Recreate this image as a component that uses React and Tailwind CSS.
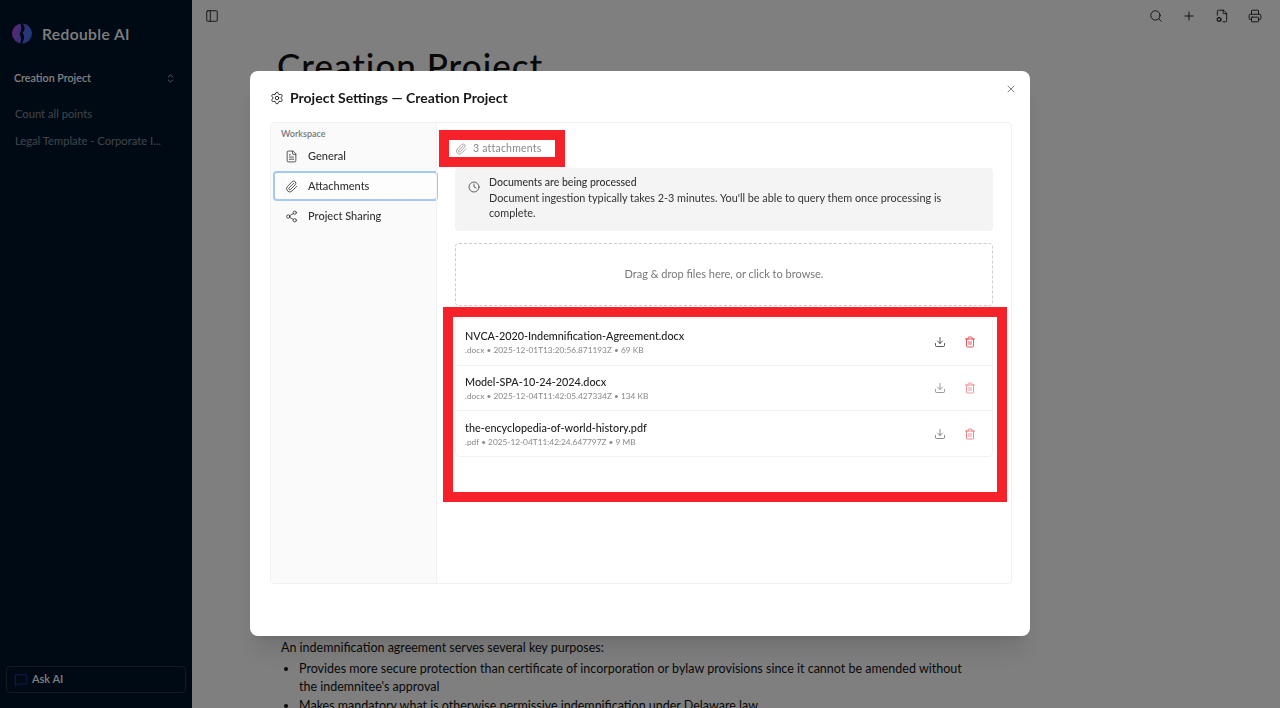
import { Settings, FileText, Paperclip, Share2, Clock, Download, Trash2, X, Search, Plus, FileCog, Printer, PanelLeft, ChevronsUpDown, MessageSquare } from 'lucide-react'

const NAV = [
  { label: 'General', Icon: FileText },
  { label: 'Attachments', Icon: Paperclip, active: true },
  { label: 'Project Sharing', Icon: Share2 },
]

const FILES = [
  { name: 'NVCA-2020-Indemnification-Agreement.docx', meta: '.docx • 2025-12-01T13:20:56.871193Z • 69 KB', dim: '' },
  { name: 'Model-SPA-10-24-2024.docx', meta: '.docx • 2025-12-04T11:42:05.427334Z • 134 KB', dim: 'opacity-60' },
  { name: 'the-encyclopedia-of-world-history.pdf', meta: '.pdf • 2025-12-04T11:42:24.647797Z • 9 MB', dim: 'opacity-70' },
]

function Sidebar() {
  return (
    <aside className="w-[192px] shrink-0 h-full bg-[#001429] flex flex-col text-white">
      <div className="flex items-center gap-[10px] pl-[12px] h-[66px]">
        <svg width="20" height="21" viewBox="0 0 20 21" className="shrink-0">
          <defs>
            <linearGradient id="logo" x1="0" y1="0" x2="1" y2="0.3">
              <stop offset="0" stopColor="#c04be8" />
              <stop offset="1" stopColor="#3f6ff0" />
            </linearGradient>
          </defs>
          <circle cx="10" cy="10.5" r="10" fill="url(#logo)" />
          <path d="M10 0 C13.5 3 13.5 7 10.5 10 C13 12.5 12.5 17 9.5 21 L8 21 C9.5 17 9.5 14 7.5 11 C10 8 9.5 3 8 0 Z" fill="#001429" />
        </svg>
        <span className="text-[15.6px] font-semibold tracking-[0.4px] pt-[3px]">Redouble AI</span>
      </div>
      <div className="flex items-center justify-between pl-[14px] pr-[16px] mt-[3px] h-[18px]">
        <span className="text-[10.7px] font-semibold">Creation Project</span>
        <ChevronsUpDown size={11} strokeWidth={1.5} />
      </div>
      <div className="flex flex-col pl-[15px] mt-[20px] gap-[13px] text-[11.2px] text-white/50">
        <span className="h-[14px] leading-[14px]">Count all points</span>
        <span className="h-[14px] leading-[14px]">Legal Template - Corporate I...</span>
      </div>
      <div className="mt-auto mx-[6px] mb-[15px] h-[27px] rounded border border-white/15 flex items-center gap-[4px] pl-[7px]">
        <MessageSquare size={14} strokeWidth={1.25} className="text-[#4a3fd0]" />
        <span className="text-[11px] font-semibold">Ask AI</span>
      </div>
    </aside>
  )
}

function Document() {
  return (
    <main className="flex-1 h-full overflow-hidden bg-white flex flex-col text-[#111]">
      <div className="h-[32px] flex items-center justify-between pl-[13px] pr-[18px] shrink-0">
        <PanelLeft size={14} strokeWidth={1.5} />
        <div className="flex items-center gap-[19px]">
          <Search size={14} strokeWidth={1.5} />
          <Plus size={14} strokeWidth={1.5} />
          <FileCog size={14} strokeWidth={1.5} />
          <Printer size={14} strokeWidth={1.5} />
        </div>
      </div>
      <h1 className="pl-[85px] mt-[13px] text-[35px] leading-[40px] font-medium tracking-[1px]">Creation Project</h1>
      <div className="pl-[89px] mt-[554px] w-[790px] text-[12.5px] leading-[18px]">
        <p>An indemnification agreement serves several key purposes:</p>
        <ul className="list-disc pl-[18px] mt-[3px]">
          <li>Provides more secure protection than certificate of incorporation or bylaw provisions since it cannot be amended without the indemnitee's approval</li>
          <li className="mt-[1px]">Makes mandatory what is otherwise permissive indemnification under Delaware law</li>
        </ul>
      </div>
    </main>
  )
}

function SettingsModal() {
  return (
    <div className="fixed left-[250px] top-[71px] w-[780px] h-[565px] bg-white rounded-lg shadow-xl text-[#18181b] flex flex-col px-[20px] pt-[18px]">
      <X size={12} strokeWidth={1.5} className="absolute right-[13px] top-[12px] text-[#555]" />
      <div className="flex items-center gap-[6px] h-[17px]">
        <Settings size={14} strokeWidth={1.5} />
        <h2 className="text-[14px] font-bold">Project Settings — Creation Project</h2>
      </div>
      <div className="relative mt-[16px] h-[462px] w-[742px] flex rounded border border-[#f0f0f0]">
        <nav className="w-[165px] shrink-0 bg-[#fafafa] pt-[5px] text-[11px]">
          <div className="pl-[10px] h-[12px] leading-[12px] text-[9px] font-semibold text-[#777]">Workspace</div>
          <div className="flex flex-col w-[165px] ml-[2px] mt-[1px]">
            {NAV.map(({ label, Icon, active }) => (
              <div key={label} className={`h-[30px] flex items-center gap-[10px] pl-[10px] rounded border-2 ${active ? 'bg-white/60 border-[#a5c8f5]' : 'border-transparent'}`}>
                <Icon size={13} strokeWidth={1.5} className="text-[#333]" />
                <span className="font-medium text-[#333]">{label}</span>
              </div>
            ))}
          </div>
        </nav>
        <section className="flex-1 border-l border-[#f0f0f0] flex flex-col pl-[18px] pr-[18px] pt-[45px]">
          <div className="bg-[#f4f4f5] rounded h-[63px] flex gap-[9px] pl-[13px] pr-[30px] pt-[7px] text-[10.85px] leading-[15px] text-[#333]">
            <Clock size={12} strokeWidth={1.5} className="mt-[6px] shrink-0" />
            <div>
              <div className="font-medium text-[10.5px]">Documents are being processed</div>
              <div>Document ingestion typically takes 2-3 minutes. You'll be able to query them once processing is complete.</div>
            </div>
          </div>
          <div className="mt-[12px] h-[63px] rounded border border-dashed border-[#ccc] flex items-center justify-center text-[11px] text-[#777]">
            Drag &amp; drop files here, or click to browse.
          </div>
          <div className="mt-[12px] border border-[#f2f2f2] rounded flex flex-col">
            {FILES.map((f, i) => (
              <div key={f.name} className={`h-[45.5px] flex items-center justify-between pl-[9px] pr-[16px] ${i ? 'border-t border-[#f2f2f2]' : ''}`}>
                <div className="pt-[2px]">
                  <div className="text-[10.8px] leading-[14px] font-medium text-[#222]">{f.name}</div>
                  <div className="text-[8.3px] leading-[12px] mt-[1px] text-[#888]">{f.meta}</div>
                </div>
                <div className={`flex items-center gap-[18px] pt-[1px] ${f.dim}`}>
                  <Download size={12} strokeWidth={1.5} className="text-[#222]" />
                  <Trash2 size={12} strokeWidth={1.5} className="text-[#e11d2a]" />
                </div>
              </div>
            ))}
          </div>
        </section>
        {/* red markup boxes drawn on top of the panel */}
        <div className="absolute left-[168px] top-[7px] w-[126px] h-[37px] border-[10px] border-[#f5222a] bg-white flex items-center gap-[6px] pl-[6px] text-[10.5px] text-[#888]">
          <Paperclip size={12} strokeWidth={1.5} />
          <span className="tracking-[0.2px]">3 attachments</span>
        </div>
        <div className="absolute left-[172px] top-[184px] w-[564px] h-[195px] border-[10px] border-[#f5222a]" />
      </div>
    </div>
  )
}

export default function App() {
  return (
    <div className="h-[708px] w-full flex overflow-hidden font-['Lato',sans-serif]">
      <Sidebar />
      <Document />
      <div className="fixed inset-0 bg-black/50" />
      <SettingsModal />
    </div>
  )
}
